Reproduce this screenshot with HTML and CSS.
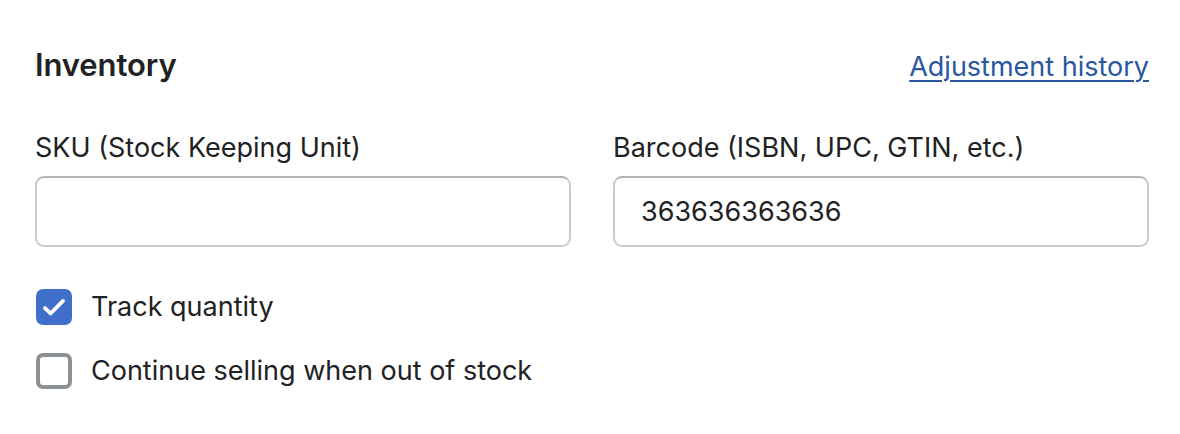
FILE: index.html
```html
<!DOCTYPE html>
<html lang="en">
<head>
  <meta charset="UTF-8">
  <title>Inventory</title>
  <link rel="stylesheet" href="styles.css">
</head>
<body>
  <div class="card">
    <div class="card-header">
      <h2>Inventory</h2>
      <a href="#" class="link">Adjustment history</a>
    </div>

    <div class="fields">
      <div class="field">
        <label for="sku">SKU (Stock Keeping Unit)</label>
        <input type="text" id="sku">
      </div>
      <div class="field">
        <label for="barcode">Barcode (ISBN, UPC, GTIN, etc.)</label>
        <input type="text" id="barcode" value="363636363636">
      </div>
    </div>

    <div class="checks">
      <label class="check">
        <span class="box checked">
          <svg viewBox="0 0 20 20" width="36" height="36"><path d="M5 10.6l3.1 3 6.9-7" fill="none" stroke="#fff" stroke-width="2.1" stroke-linecap="round" stroke-linejoin="round"/></svg>
        </span>
        Track quantity
      </label>
      <label class="check">
        <span class="box"></span>
        Continue selling when out of stock
      </label>
    </div>
  </div>
</body>
</html>
```

FILE: styles.css
```css
* {
  margin: 0;
  padding: 0;
  box-sizing: border-box;
}

body {
  font-family: Inter, "Noto Sans", sans-serif;
  background-color: #fff;
  color: #202223;
}

.card {
  padding: 44px 31px 0 35px;
}

.card-header {
  display: flex;
  justify-content: space-between;
  align-items: center;
  height: 40px;
}

h2 {
  font-size: 31px;
  font-weight: 600;
  letter-spacing: -0.1px;
}

.link {
  font-size: 27px;
  color: #2a579f;
  text-decoration: underline;
  text-underline-offset: 4px;
  text-decoration-thickness: 2px;
  margin-top: 4px;
}

.fields {
  display: grid;
  grid-template-columns: 1fr 1fr;
  gap: 42px;
  margin-top: 44px;
}

.field label {
  display: block;
  font-size: 27px;
  line-height: 40px;
  margin-bottom: 8px;
}

.field input {
  width: 100%;
  height: 71px;
  border: 2px solid #c9cccf;
  border-top-color: #aeb4b9;
  border-radius: 9px;
  padding: 0 26px;
  font-family: inherit;
  font-size: 27px;
  color: #202223;
  outline: none;
}

.checks {
  margin-top: 42px;
  display: flex;
  flex-direction: column;
  gap: 28px;
}

.check {
  display: flex;
  align-items: center;
  gap: 19px;
  font-size: 27px;
  line-height: 36px;
  padding-left: 1px;
}

.box {
  width: 36px;
  height: 36px;
  border-radius: 7px;
  border: 4px solid #8c9196;
  display: flex;
  align-items: center;
  justify-content: center;
}

.box.checked {
  background-color: #3f6fc9;
  border: none;
}
```
